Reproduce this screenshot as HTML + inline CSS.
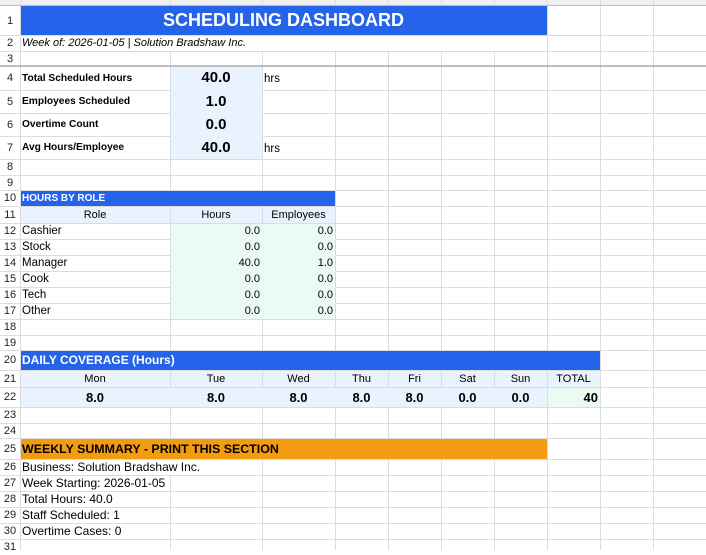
<!DOCTYPE html>
<html><head><meta charset="utf-8"><style>
body{margin:0;width:706px;height:550px;overflow:hidden;background:#fff;font-family:"Liberation Sans",sans-serif;font-size:11px;color:#000;position:relative}
.f{position:absolute}
.t{position:absolute;display:flex;align-items:center;white-space:nowrap;padding:0 2px;box-sizing:border-box}
.c{justify-content:center}.r{justify-content:flex-end}
.b{font-weight:bold}
.n{font-size:11.5px}
.lb{font-size:10.2px}
.rn{position:absolute;left:0;width:20px;text-align:center;font-size:11px;color:#222;display:flex;align-items:center;justify-content:center}
</style></head><body>
<svg class="f" style="left:0;top:0" width="706" height="550">
<rect x="0" y="0" width="706" height="5" fill="#efefef"/>
<g stroke="#dcdcdc" stroke-width="1">
<line x1="20.5" y1="0" x2="20.5" y2="550"/>
<line x1="170.5" y1="0" x2="170.5" y2="550"/><line x1="262.5" y1="0" x2="262.5" y2="550"/><line x1="335.5" y1="0" x2="335.5" y2="550"/><line x1="388.5" y1="0" x2="388.5" y2="550"/><line x1="441.5" y1="0" x2="441.5" y2="550"/><line x1="494.5" y1="0" x2="494.5" y2="550"/><line x1="547.5" y1="0" x2="547.5" y2="550"/><line x1="600.5" y1="0" x2="600.5" y2="550"/><line x1="653.5" y1="0" x2="653.5" y2="550"/>
<line x1="0" y1="35.5" x2="706" y2="35.5"/><line x1="0" y1="51.5" x2="706" y2="51.5"/><line x1="0" y1="90.5" x2="706" y2="90.5"/><line x1="0" y1="113.5" x2="706" y2="113.5"/><line x1="0" y1="136.5" x2="706" y2="136.5"/><line x1="0" y1="159.5" x2="706" y2="159.5"/><line x1="0" y1="175.5" x2="706" y2="175.5"/><line x1="0" y1="190.5" x2="706" y2="190.5"/><line x1="0" y1="206.5" x2="706" y2="206.5"/><line x1="0" y1="223.5" x2="706" y2="223.5"/><line x1="0" y1="239.5" x2="706" y2="239.5"/><line x1="0" y1="255.5" x2="706" y2="255.5"/><line x1="0" y1="271.5" x2="706" y2="271.5"/><line x1="0" y1="287.5" x2="706" y2="287.5"/><line x1="0" y1="303.5" x2="706" y2="303.5"/><line x1="0" y1="319.5" x2="706" y2="319.5"/><line x1="0" y1="335.5" x2="706" y2="335.5"/><line x1="0" y1="350.5" x2="706" y2="350.5"/><line x1="0" y1="370.5" x2="706" y2="370.5"/><line x1="0" y1="387.5" x2="706" y2="387.5"/><line x1="0" y1="407.5" x2="706" y2="407.5"/><line x1="0" y1="423.5" x2="706" y2="423.5"/><line x1="0" y1="438.5" x2="706" y2="438.5"/><line x1="0" y1="459.5" x2="706" y2="459.5"/><line x1="0" y1="475.5" x2="706" y2="475.5"/><line x1="0" y1="491.5" x2="706" y2="491.5"/><line x1="0" y1="507.5" x2="706" y2="507.5"/><line x1="0" y1="523.5" x2="706" y2="523.5"/><line x1="0" y1="539.5" x2="706" y2="539.5"/>
</g>
<line x1="0" y1="5.5" x2="706" y2="5.5" stroke="#bdbdbd"/>
<line x1="0" y1="66" x2="706" y2="66" stroke="#a8a8a8" stroke-width="1.5"/>
</svg>
<div class="f" style="left:21px;top:6px;width:526px;height:29px;background:#2563eb"></div>
<div class="f" style="left:21px;top:36px;width:526px;height:15px;background:#fff"></div>
<div class="f" style="left:171px;top:67px;width:91px;height:92px;background:#e9f3fd"></div>
<div class="f" style="left:21px;top:191px;width:314px;height:15px;background:#2563eb"></div>
<div class="f" style="left:21px;top:207px;width:314px;height:16px;background:#e9f3fd"></div>
<div class="f" style="left:171px;top:224px;width:164px;height:95px;background:#ebfaf2"></div>
<div class="f" style="left:21px;top:351px;width:579px;height:19px;background:#2563eb"></div>
<div class="f" style="left:21px;top:371px;width:579px;height:16px;background:#e9f3fd"></div>
<div class="f" style="left:21px;top:388px;width:526px;height:19px;background:#e9f3fd"></div>
<div class="f" style="left:548px;top:388px;width:52px;height:19px;background:#ebfaf2"></div>
<div class="f" style="left:21px;top:439px;width:526px;height:20px;background:#f39c0f"></div>
<div class="f" style="left:21px;top:460px;width:200px;height:15px;background:#fff"></div>
<svg class="f" style="left:0;top:0" width="706" height="550"><g stroke="#d6dde6">
<line x1="170.5" y1="207" x2="170.5" y2="223"/><line x1="262.5" y1="207" x2="262.5" y2="223"/>
<line x1="170.5" y1="371" x2="170.5" y2="387"/><line x1="262.5" y1="371" x2="262.5" y2="387"/><line x1="335.5" y1="371" x2="335.5" y2="387"/><line x1="388.5" y1="371" x2="388.5" y2="387"/><line x1="441.5" y1="371" x2="441.5" y2="387"/><line x1="494.5" y1="371" x2="494.5" y2="387"/><line x1="547.5" y1="371" x2="547.5" y2="387"/>
</g></svg>
<div class="rn" style="top:6px;height:29px">1</div><div class="rn" style="top:35px;height:16px">2</div><div class="rn" style="top:51px;height:15px">3</div><div class="rn" style="top:66px;height:24px">4</div><div class="rn" style="top:90px;height:23px">5</div><div class="rn" style="top:113px;height:23px">6</div><div class="rn" style="top:136px;height:23px">7</div><div class="rn" style="top:159px;height:16px">8</div><div class="rn" style="top:175px;height:15px">9</div><div class="rn" style="top:190px;height:16px">10</div><div class="rn" style="top:206px;height:17px">11</div><div class="rn" style="top:223px;height:16px">12</div><div class="rn" style="top:239px;height:16px">13</div><div class="rn" style="top:255px;height:16px">14</div><div class="rn" style="top:271px;height:16px">15</div><div class="rn" style="top:287px;height:16px">16</div><div class="rn" style="top:303px;height:16px">17</div><div class="rn" style="top:319px;height:16px">18</div><div class="rn" style="top:335px;height:15px">19</div><div class="rn" style="top:350px;height:20px">20</div><div class="rn" style="top:370px;height:17px">21</div><div class="rn" style="top:387px;height:20px">22</div><div class="rn" style="top:407px;height:16px">23</div><div class="rn" style="top:423px;height:15px">24</div><div class="rn" style="top:438px;height:21px">25</div><div class="rn" style="top:459px;height:16px">26</div><div class="rn" style="top:475px;height:16px">27</div><div class="rn" style="top:491px;height:16px">28</div><div class="rn" style="top:507px;height:16px">29</div><div class="rn" style="top:523px;height:16px">30</div><div class="rn" style="top:539px;height:16px">31</div>
<div class="t c b" style="left:20px;top:6px;width:527px;height:29px;color:#fff;font-size:18px">SCHEDULING DASHBOARD</div>
<div class="t" style="left:20px;top:35px;height:16px;font-style:italic">Week of: 2026-01-05 | Solution Bradshaw Inc.</div>
<div class="t b lb" style="left:20px;top:67px;height:23px">Total Scheduled Hours</div>
<div class="t b lb" style="left:20px;top:90px;height:23px">Employees Scheduled</div>
<div class="t b lb" style="left:20px;top:113px;height:23px">Overtime Count</div>
<div class="t b lb" style="left:20px;top:136px;height:23px">Avg Hours/Employee</div>
<div class="t c b" style="left:170px;top:66px;width:92px;height:23px;font-size:15px">40.0</div>
<div class="t c b" style="left:170px;top:90px;width:92px;height:23px;font-size:15px">1.0</div>
<div class="t c b" style="left:170px;top:113px;width:92px;height:23px;font-size:15px">0.0</div>
<div class="t c b" style="left:170px;top:136px;width:92px;height:23px;font-size:15px">40.0</div>
<div class="t n" style="left:262px;top:67px;height:23px">hrs</div>
<div class="t n" style="left:262px;top:137px;height:23px">hrs</div>
<div class="t b" style="left:20px;top:190px;height:16px;color:#fff;font-size:10px">HOURS BY ROLE</div>
<div class="t c" style="left:20px;top:206px;width:150px;height:17px">Role</div>
<div class="t c" style="left:170px;top:206px;width:92px;height:17px">Hours</div>
<div class="t c" style="left:262px;top:206px;width:73px;height:17px">Employees</div>
<div class="t n" style="left:20px;top:223px;height:16px">Cashier</div><div class="t r" style="left:170px;top:223px;width:92px;height:16px">0.0</div><div class="t r" style="left:262px;top:223px;width:73px;height:16px">0.0</div>
<div class="t n" style="left:20px;top:239px;height:16px">Stock</div><div class="t r" style="left:170px;top:239px;width:92px;height:16px">0.0</div><div class="t r" style="left:262px;top:239px;width:73px;height:16px">0.0</div>
<div class="t n" style="left:20px;top:255px;height:16px">Manager</div><div class="t r" style="left:170px;top:255px;width:92px;height:16px">40.0</div><div class="t r" style="left:262px;top:255px;width:73px;height:16px">1.0</div>
<div class="t n" style="left:20px;top:271px;height:16px">Cook</div><div class="t r" style="left:170px;top:271px;width:92px;height:16px">0.0</div><div class="t r" style="left:262px;top:271px;width:73px;height:16px">0.0</div>
<div class="t n" style="left:20px;top:287px;height:16px">Tech</div><div class="t r" style="left:170px;top:287px;width:92px;height:16px">0.0</div><div class="t r" style="left:262px;top:287px;width:73px;height:16px">0.0</div>
<div class="t n" style="left:20px;top:303px;height:16px">Other</div><div class="t r" style="left:170px;top:303px;width:92px;height:16px">0.0</div><div class="t r" style="left:262px;top:303px;width:73px;height:16px">0.0</div>
<div class="t b" style="left:20px;top:350px;height:20px;color:#fff;font-size:12px">DAILY COVERAGE (Hours)</div>
<div class="t c" style="left:20px;top:370px;width:150px;height:17px">Mon</div><div class="t c" style="left:170px;top:370px;width:92px;height:17px">Tue</div><div class="t c" style="left:262px;top:370px;width:73px;height:17px">Wed</div><div class="t c" style="left:335px;top:370px;width:53px;height:17px">Thu</div><div class="t c" style="left:388px;top:370px;width:53px;height:17px">Fri</div><div class="t c" style="left:441px;top:370px;width:53px;height:17px">Sat</div><div class="t c" style="left:494px;top:370px;width:53px;height:17px">Sun</div><div class="t c" style="left:547px;top:370px;width:53px;height:17px">TOTAL</div>
<div class="t c b" style="left:20px;top:387px;width:150px;height:20px;font-size:13px">8.0</div><div class="t c b" style="left:170px;top:387px;width:92px;height:20px;font-size:13px">8.0</div><div class="t c b" style="left:262px;top:387px;width:73px;height:20px;font-size:13px">8.0</div><div class="t c b" style="left:335px;top:387px;width:53px;height:20px;font-size:13px">8.0</div><div class="t c b" style="left:388px;top:387px;width:53px;height:20px;font-size:13px">8.0</div><div class="t c b" style="left:441px;top:387px;width:53px;height:20px;font-size:13px">0.0</div><div class="t c b" style="left:494px;top:387px;width:53px;height:20px;font-size:13px">0.0</div><div class="t r b" style="left:547px;top:387px;width:53px;height:20px;font-size:13px">40</div>
<div class="t b" style="left:20px;top:438px;height:21px;font-size:12.4px">WEEKLY SUMMARY - PRINT THIS SECTION</div>
<div class="t" style="left:20px;top:459px;height:16px;font-size:12px">Business: Solution Bradshaw Inc.</div>
<div class="t" style="left:20px;top:475px;height:16px;font-size:12px">Week Starting: 2026-01-05</div>
<div class="t" style="left:20px;top:491px;height:16px;font-size:12px">Total Hours: 40.0</div>
<div class="t" style="left:20px;top:507px;height:16px;font-size:12px">Staff Scheduled: 1</div>
<div class="t" style="left:20px;top:523px;height:16px;font-size:12px">Overtime Cases: 0</div>
</body></html>
